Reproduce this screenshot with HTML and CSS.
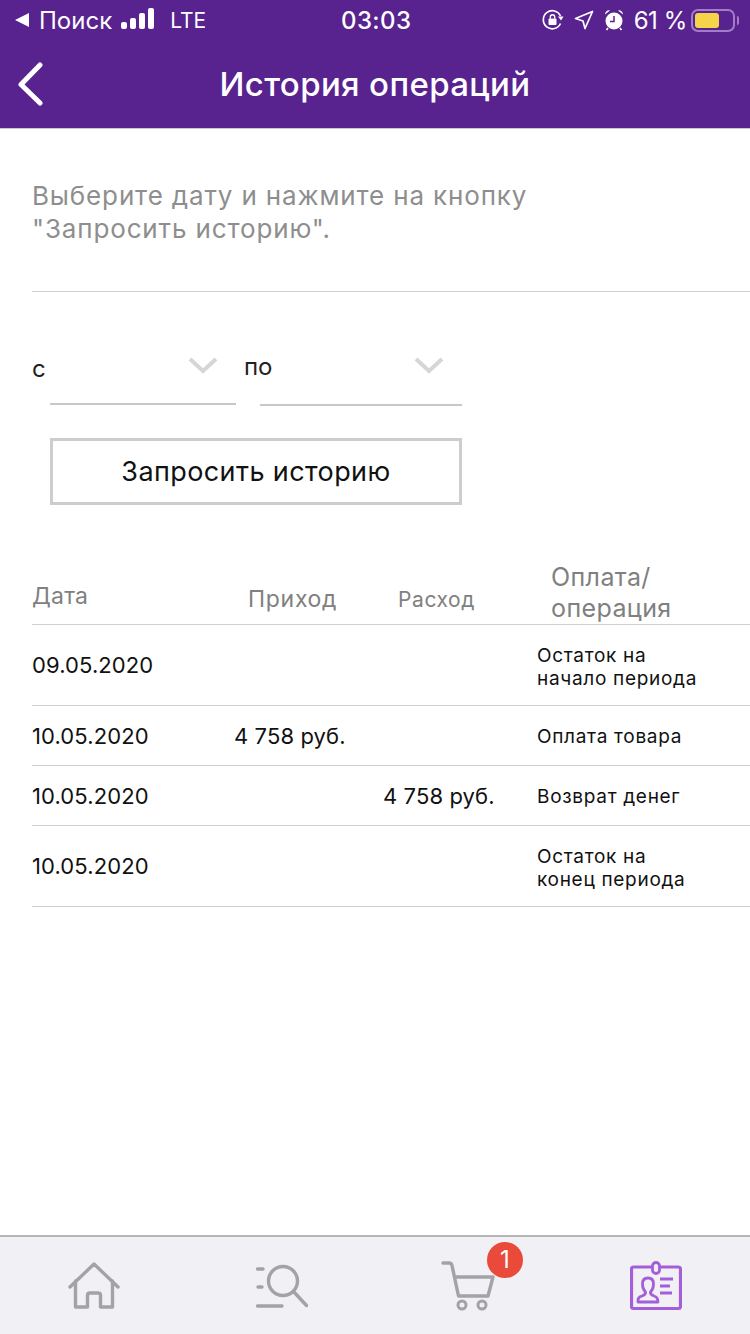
FILE: index.html

```html
<!DOCTYPE html>
<html lang="ru">
<head>
    <meta charset="UTF-8">
    <meta name="viewport" content="width=device-width, initial-scale=1.0">
    <title>История операций</title>
    <link rel="stylesheet" href="styles.css">
</head>
<body>
    <div class="app">
        <div class="topbar">
            <!-- Status bar -->
            <div class="status">
                <div class="status-left">
                    <svg class="back-tri" width="16" height="16" viewBox="0 0 16 16"><path d="M15 1V15L1 8Z" fill="#fff"/></svg>
                    <span class="carrier">Поиск</span>
                    <svg class="signal" width="34" height="22" viewBox="0 0 34 22"><rect x="0" y="14" width="6" height="7" rx="2" fill="#fff"/><rect x="9" y="10" width="6" height="11" rx="2" fill="#fff"/><rect x="18" y="5" width="6" height="16" rx="2" fill="#fff"/><rect x="27" y="0" width="6" height="21" rx="2" fill="#fff"/></svg>
                    <span class="network">LTE</span>
                </div>
                <div class="clock">03:03</div>
                <div class="status-right">
                    <svg width="22" height="22" viewBox="0 0 22 22"><path d="M18.5 14.5A9 9 0 1 1 18.5 7" fill="none" stroke="#fff" stroke-width="1.7"/><path d="M16 7.5h5.500L19 11.500Z" fill="#fff"/><rect x="6.500" y="9.500" width="8" height="6.500" rx="1" fill="#fff"/><path d="M8.300 9.500V8a2.200 2.200 0 0 1 4.400 0v1.500" fill="none" stroke="#fff" stroke-width="1.400"/></svg>
                    <svg width="20" height="20" viewBox="0 0 20 20"><path d="M18.500 1.500L11 18.500L9 11L1.500 8.500Z" fill="none" stroke="#fff" stroke-width="1.700" stroke-linejoin="round"/></svg>
                    <svg width="20" height="22" viewBox="0 0 20 22"><circle cx="10" cy="12" r="8.500" fill="#fff"/><path d="M10 7V12.500H6" fill="none" stroke="#58228f" stroke-width="1.500"/><path d="M1 5.500A4 4 0 0 1 6 1.500ZM19 5.500A4 4 0 0 0 14 1.500Z" fill="#fff"/><path d="M4 19L2.500 21M16 19L17.500 21" stroke="#fff" stroke-width="1.600"/></svg>
                    <span class="battery-text">61 %</span>
                    <div class="battery"><div class="battery-fill"></div></div>
                    <div class="battery-cap"></div>
                </div>
            </div>
            <!-- Nav bar -->
            <div class="nav">
                <svg class="nav-back" width="28" height="44" viewBox="0 0 28 44"><path d="M24 3L5 22.500L24 41" fill="none" stroke="#fff" stroke-width="5" stroke-linecap="round" stroke-linejoin="round"/></svg>
                <h1>История операций</h1>
            </div>
        </div>

        <div class="content">
            <p class="hint">Выберите дату и нажмите на кнопку<br>"Запросить историю".</p>

            <div class="filter">
                <span class="filter-label label-from">с</span>
                <div class="date-select select-from">
                    <svg width="30" height="17" viewBox="0 0 30 17"><path d="M2 2L15 14L28 2" fill="none" stroke="#d6d6d6" stroke-width="4"/></svg>
                </div>
                <span class="filter-label label-to">по</span>
                <div class="date-select select-to">
                    <svg width="30" height="17" viewBox="0 0 30 17"><path d="M2 2L15 14L28 2" fill="none" stroke="#d6d6d6" stroke-width="4"/></svg>
                </div>
            </div>

            <button class="request-btn">Запросить историю</button>

            <div class="history">
                <div class="row head">
                    <div class="th-date">Дата</div>
                    <div class="th-in">Приход</div>
                    <div class="th-out">Расход</div>
                    <div class="th-op">Оплата/<br>операция</div>
                </div>
                <div class="row tall">
                    <div class="date">09.05.2020</div><div></div><div></div>
                    <div class="op">Остаток на<br>начало периода</div>
                </div>
                <div class="row">
                    <div class="date">10.05.2020</div><div class="sum">4 758 руб.</div><div></div>
                    <div class="op">Оплата товара</div>
                </div>
                <div class="row">
                    <div class="date">10.05.2020</div><div></div><div class="sum">4 758 руб.</div>
                    <div class="op">Возврат денег</div>
                </div>
                <div class="row tall">
                    <div class="date">10.05.2020</div><div></div><div></div>
                    <div class="op">Остаток на<br>конец периода</div>
                </div>
            </div>
        </div>

        <!-- Tab bar -->
        <div class="tabs">
            <div class="tab">
                <svg width="52" height="50" viewBox="0 0 52 50"><path d="M2 26L26 3L50 26M7.500 20V46H19.500V34.500Q19.500 32 22 32H30Q32.500 32 32.500 34.500V46H44.500V20" fill="none" stroke="#a3a3a6" stroke-width="3.400" stroke-linecap="round" stroke-linejoin="round"/></svg>
            </div>
            <div class="tab">
                <svg width="54" height="48" viewBox="0 0 54 48"><circle cx="28" cy="20" r="14.500" fill="none" stroke="#a3a3a6" stroke-width="3.400"/><path d="M38.500 30.500L51.500 44.500" stroke="#a3a3a6" stroke-width="3.400" stroke-linecap="round"/><path d="M2.500 8H8M3 26H7M2.500 45H27" stroke="#a3a3a6" stroke-width="3.400" stroke-linecap="round"/></svg>
            </div>
            <div class="tab">
                <div class="cart">
                    <svg width="54" height="50" viewBox="0 0 54 50"><path d="M2 2H8Q10.500 2 11 4.500L17.500 35H47L52 16H14" fill="none" stroke="#a3a3a6" stroke-width="3.400" stroke-linecap="round" stroke-linejoin="round"/><circle cx="21" cy="44" r="4" fill="none" stroke="#a3a3a6" stroke-width="3"/><circle cx="41" cy="44" r="4" fill="none" stroke="#a3a3a6" stroke-width="3"/></svg>
                    <span class="badge">1</span>
                </div>
            </div>
            <div class="tab tab-profile">
                <svg width="52" height="50" viewBox="0 0 52 50"><rect x="1.500" y="6" width="49" height="41.500" rx="2" fill="none" stroke="#a45fd8" stroke-width="3.200"/><rect x="22.500" y="1.500" width="7" height="11" rx="3.500" fill="#f1f0f5" stroke="#a45fd8" stroke-width="2.800"/><path d="M8 41V39Q8 36 12 35Q16 33.500 15.500 31Q12.500 28 12.500 23Q12.500 17 18 17Q23.500 17 23.500 23Q23.500 28 20.500 31Q20 33.500 24 35Q28 36 28 41Z" fill="none" stroke="#a45fd8" stroke-width="2.800" stroke-linejoin="round"/><path d="M30 18H43M30 25H40M30 32H42" stroke="#a45fd8" stroke-width="3"/></svg>
            </div>
        </div>
    </div>
</body>
</html>
```

FILE: styles.css

```css
* { box-sizing: border-box; }
body { margin: 0; font-family: Inter, "Noto Sans", sans-serif; background: #fff; color: #000; }
.app { width: 750px; height: 1334px; display: flex; flex-direction: column; overflow: hidden; }

.topbar { height: 129px; background: #58228f; color: #fff; border-bottom: 1px solid #c9c6cf; }
.status { height: 40px; padding: 0 11px 0 14px; display: flex; align-items: center; position: relative; font-size: 24px; }
.status-left { display: flex; align-items: center; width: 325px; }
.back-tri { margin-right: 9px; }
.carrier { letter-spacing: 0; margin-right: 9px; }
.signal { margin-right: 15px; margin-bottom: 2px; }
.network { font-size: 21px; }
.clock { font-size: 24px; font-weight: 500; letter-spacing: 0.4px; width: 82px; margin-left: 2px; }
.status-right { display: flex; align-items: center; gap: 10px; margin-left: auto; }
.battery-text { letter-spacing: -0.4px; }
.battery { width: 44px; height: 23px; border: 2px solid #a27cc7; border-radius: 7px; padding: 2px; margin-left: -6px; }
.battery-fill { width: 24px; height: 15px; background: #f5d44a; border-radius: 3px; }
.battery-cap { width: 2px; height: 9px; margin-left: -8px; background: #a27cc7; border-radius: 0 2px 2px 0; }

.nav { height: 88px; display: flex; align-items: center; justify-content: center; position: relative; padding-bottom: 1px; }
.nav h1 { margin: 0; font-size: 33px; font-weight: 550; letter-spacing: 0.35px; }
.nav-back { position: absolute; left: 16px; top: 22px; }

.content { flex: 1; display: flex; flex-direction: column; }
.hint { margin: 50px 0 0 32px; padding-bottom: 46px; border-bottom: 1px solid #cfcfcf; font-size: 26px; line-height: 33px; color: #8e8e8e; letter-spacing: 0.85px; }

.filter { display: flex; align-items: flex-start; margin: 52px 0 0 32px; height: 62px; }
.filter-label { font-size: 24px; line-height: 30px; color: #222; }
.label-from { width: 18px; margin-top: 10px; }
.label-to { width: 16px; margin-top: 8px; margin-left: 8px; flex: none; }
.date-select { display: flex; justify-content: flex-end; border-bottom: 2px solid #c8c8c8; height: 61px; padding-top: 13px; }
.select-from { width: 186px; padding-right: 18px; height: 61px; }
.select-to { width: 202px; margin-left: 0; padding-right: 18px; height: 62px; }

.request-btn { margin: 32px 0 0 50px; width: 412px; height: 67px; background: #fff; border: 3px solid #cdcdcd; font-family: inherit; font-size: 27px; color: #111; letter-spacing: 0.4px; padding: 0; }

.history { margin: 52px 0 0 32px; }
.row { display: grid; grid-template-columns: 202px 149px 153px 1fr; align-items: center; height: 60px; border-bottom: 1px solid #cfcfcf; font-size: 22px; letter-spacing: 0.1px; }
.row.tall { height: 81px; }
.row.head { height: 68px; align-items: end; color: #808080; }
.th-date { font-size: 23px; letter-spacing: 0.2px; padding-bottom: 14px; }
.th-in { font-size: 23px; letter-spacing: 0.7px; padding-left: 14px; padding-bottom: 11px; }
.th-out { font-size: 21px; letter-spacing: 0.6px; padding-left: 15px; padding-bottom: 12px; }
.th-op { font-size: 25px; line-height: 31px; padding-left: 15px; padding-bottom: 0; letter-spacing: 0.4px; }
.date { color: #111; }
.sum { white-space: nowrap; color: #111; }
.op { font-size: 19px; line-height: 23px; color: #111; letter-spacing: 0.7px; padding: 2px 0 0 1px; }
.tall .op { padding-top: 4px; }

.tabs { height: 99px; background: #f1f0f5; border-top: 2px solid #b5b5b8; display: grid; grid-template-columns: 188px 188px 184px 190px; margin-top: auto; }
.tab { display: flex; justify-content: center; padding-top: 24px; }
.tab-profile { padding-left: 2px; }
.cart { position: relative; height: 50px; }
.badge { position: absolute; top: -19px; right: -28px; width: 36px; height: 36px; border-radius: 50%; background: #ea4a3a; color: #fff; font-size: 24px; line-height: 36px; text-align: center; }
```
